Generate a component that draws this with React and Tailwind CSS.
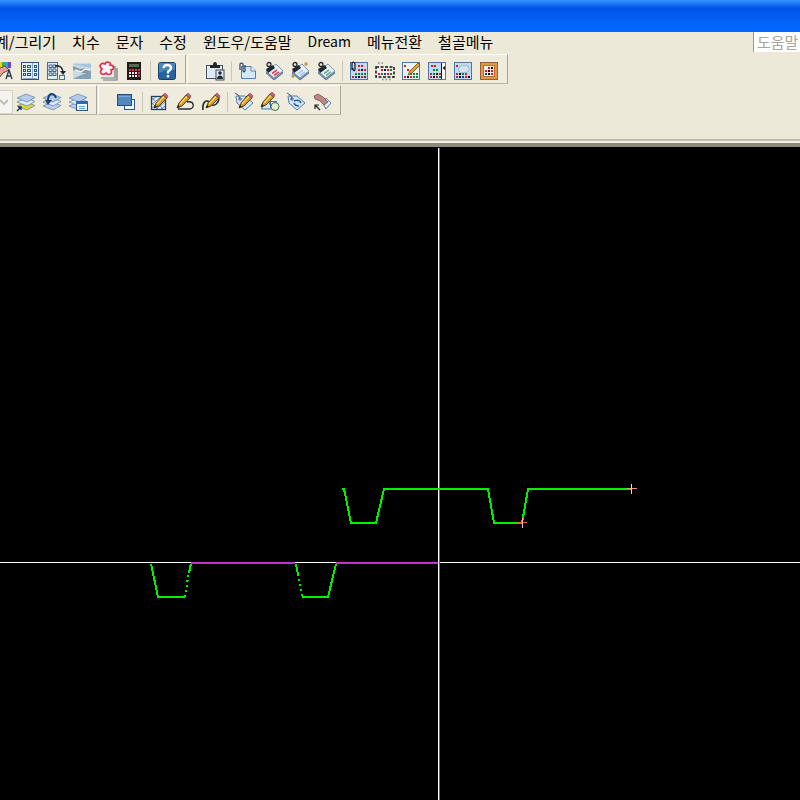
import React from "react";

const FONT = "font-['Noto_Sans_CJK_KR',sans-serif]";

function Dots({ x = 4, y = 4, cols = 4, rows = 4, colors }) {
  const palette = colors || ["#e01818", "#1a7a30", "#111111", "#153a9c", "#e01818", "#111111", "#1a7a30"];
  const cells = [];
  for (let r = 0; r < rows; r++) {
    for (let c = 0; c < cols; c++) {
      cells.push(
        <rect key={r + "-" + c} x={x + c * 3} y={y + r * 3} width="2" height="2" fill={palette[(r * 3 + c * 2) % palette.length]} />
      );
    }
  }
  return <g shapeRendering="crispEdges">{cells}</g>;
}

function Frame({ fill = "#c3dcf6", stroke = "#4a76ad" }) {
  return <rect x="1.5" y="1.5" width="17" height="17" fill={fill} stroke={stroke} shapeRendering="crispEdges" />;
}

function Pencil() {
  return (
    <g>
      <path d="M5 16 L7 11 L14 3 L18 6 L10 14 Z" fill="#d29c22" stroke="#5f3d10" strokeWidth="1" />
      <path d="M14 3 L16 1 L19 4 L18 6 Z" fill="#c9647c" stroke="#8a4055" strokeWidth=".7" />
      <path d="M8 12 L15 4.5" stroke="#f7d867" strokeWidth="1.2" />
      <path d="M5 16 L6 13 L8 14.500 Z" fill="#222" />
    </g>
  );
}

function Layers({ base = "#b9d0ec" }) {
  return (
    <g stroke="#6b88ac" strokeWidth=".8">
      <path d="M1 14 L10 10 L19 13.500 L11 18 Z" fill={base} />
      <path d="M1 10 L10 6 L19 9.500 L11 14 Z" fill="#dceafa" />
      <path d="M1 6 L10 2 L19 5.500 L11 10 Z" fill="#b4cdec" />
    </g>
  );
}

function Clip({ stripe, spark }) {
  return (
    <g>
      <path d="M2 12 L12 5 L19 12 L10 19 Z" fill="#7893b5" stroke="#48648c" strokeWidth=".8" />
      <path d="M2 10 L12 3 L19 10 L10 17 Z" fill="#e6f0fb" stroke="#66809f" strokeWidth=".8" />
      <path d="M8 12.500 L13 9 M10 14.500 L15 11" stroke={stripe} strokeWidth="1.600" />
      <path d="M2 8 L9 4 L11 7 L4 12 Z" fill="#23272c" />
      <circle cx="5" cy="3.500" r="2" fill="none" stroke="#23272c" strokeWidth="1.3" />
      {spark && <path d="M16 1 V5 M14 3 H18 M3 13 V17 M1 15 H5" stroke="#a98d33" strokeWidth="1.2" />}
    </g>
  );
}

function Tag() {
  return (
    <g>
      <path d="M2 4 L11 4 L19 11 L11 18 L3 11 Z" fill="#d3e7f8" stroke="#527ca8" />
      <circle cx="6" cy="7" r="1.2" fill="#fff" stroke="#2d4d78" />
      <path d="M1 1 Q5 2 6 7" fill="none" stroke="#555" />
    </g>
  );
}

const ICONS = {
  colorText: (
    <g>
      <rect x="5" y="1" width="3" height="6" fill="#f0d21c" />
      <rect x="8" y="1" width="3" height="6" fill="#38b54a" />
      <rect x="11" y="1" width="3" height="6" fill="#28a7dd" />
      <rect x="14" y="1" width="3" height="6" fill="#6a48c8" />
      <path d="M4 8 L11 5 L15 9 L9 12 L5 17 L3 13 Z" fill="#e3a295" stroke="#7d4139" />
      <path d="M12 18 L15 9 L18 18 M13 15 H17" fill="none" stroke="#26344f" strokeWidth="1.3" />
    </g>
  ),
  palette: (
    <g shapeRendering="crispEdges">
      <rect x="1.500" y="1.500" width="17" height="17" fill="#e9f2fb" stroke="#294f85" />
      {[4, 8, 12].map((y) =>
        [3, 7.5, 14].map((x) => <rect key={x + "-" + y} x={x} y={y} width="2.500" height="2.500" fill="#fff" stroke="#294f85" />)
      )}
      <path d="M12 2 V18 M3 17 H17" stroke="#8aa6cb" />
    </g>
  ),
  paletteMove: (
    <g>
      <rect x="1.500" y="1.500" width="10" height="17" fill="#dfebf8" stroke="#456c9e" />
      {[4, 8, 12].map((y) => (
        <path key={y} d={"M3 " + y + " h3 v2.500 h-3 z M7 " + y + " h3 v2.500 h-3 z"} fill="#fff" stroke="#294f85" strokeWidth=".9" />
      ))}
      <path d="M9 5 Q17 4 17 12" fill="none" stroke="#18263d" strokeWidth="1.600" />
      <path d="M14 10 H20 L17 14 Z" fill="#18263d" />
      <rect x="13.500" y="14.500" width="5" height="4" fill="#e5f0fb" stroke="#4b70a0" />
    </g>
  ),
  image: (
    <g>
      <rect x="1" y="2" width="18" height="16" fill="#c9dae6" />
      <path d="M1 3 H19 V7 L10 5 Z" fill="#a5c6dc" />
      <path d="M1 5 L8 8 L13 7 L19 10 V13 L10 12 L1 9 Z" fill="#8a98a3" />
      <path d="M1 18 L9 14 L19 11 V18 Z" fill="#7fa3b8" />
      <path d="M3 9 L9 11 L13 8 L18 9" stroke="#eef5fa" strokeWidth="1.500" fill="none" />
    </g>
  ),
  cloud: (
    <g>
      <path d="M3 17 H17 V5 M5 19 H19 V7" fill="none" stroke="#6d7478" strokeWidth="1.200" />
      <rect x="1" y="2" width="14" height="13" fill="#f7ecec" />
      <path d="M4 8 C0 5 3 1 7 3 C8 0 14 1 12 4 C17 4 16 9 13 9 C15 13 10 15 8 12 C5 15 0 12 4 8 Z" fill="#fff2f4" stroke="#e02848" strokeWidth="1.600" />
    </g>
  ),
  calculator: (
    <g shapeRendering="crispEdges">
      <rect x="3" y="1" width="14" height="18" fill="#24191b" />
      <rect x="5" y="3" width="10" height="3" fill="#4f6f4e" />
      {[8, 11, 14].map((y) =>
        [5, 8, 11, 14].map((x) => (
          <rect key={x + "-" + y} x={x} y={y} width="2" height="2" fill={y === 8 || x === 14 ? "#d13d4b" : "#f1e9e9"} />
        ))
      )}
    </g>
  ),
  help: (
    <g>
      <rect x="1.500" y="1.500" width="17" height="17" rx="2" fill="#27649f" stroke="#16406f" />
      <path d="M2 2 H18 V9 Q10 7 2 12 Z" fill="#4c86bd" />
      <path d="M6.500 7 Q7 4 10 4 Q14 4 14 7 Q14 9 11 10.500 V12.500" fill="none" stroke="#fff" strokeWidth="2.300" />
      <rect x="9.800" y="14" width="2.400" height="2.400" fill="#fff" />
    </g>
  ),
  clipboard: (
    <g>
      <rect x="1.500" y="4.500" width="16" height="13" fill="#dfe9f3" stroke="#4b5562" />
      <path d="M5 7 V4 H8 Q8 1 10 1 Q12 1 12 4 H15 V7 Z" fill="#20262e" />
      <rect x="11" y="9" width="8" height="10" fill="#e8edf2" stroke="#3b4654" />
      <circle cx="15" cy="12" r="1.800" fill="#1f2937" />
      <path d="M12 18 Q12 14.500 15 14.500 Q18 14.500 18 18 Z" fill="#1f2937" />
    </g>
  ),
  clippedPage: (
    <g>
      <path d="M3.500 5.500 H13 L17.500 10 V17.500 H3.500 Z" fill="#d4e8fa" stroke="#5480b0" />
      <path d="M13 5.500 V10 H17.500" fill="#fff" stroke="#5480b0" />
      <path d="M2 9 V3 Q3 1 5 3 V10 Q6 12 7 10 V4" fill="none" stroke="#27415f" strokeWidth="1.200" />
    </g>
  ),
  clipRed: <Clip stripe="#e0444e" />,
  clipSpark: <Clip stripe="#a7cbe9" spark />,
  clipGreen: <Clip stripe="#6fb287" />,
  dotsClip: (
    <g>
      <Frame />
      <Dots x={3} y={15} cols={5} rows={1} colors={["#e01818", "#111", "#153a9c"]} />
      <Dots x={6} y={12} cols={4} rows={1} colors={["#1a7a30", "#111"]} />
      <Dots x={9} y={8} cols={3} rows={1} />
      <Dots x={9} y={4} cols={2} rows={1} colors={["#e01818"]} />
      <path d="M3 9 V2 Q5 0 6 3 V9 Q4 11 4 7" fill="none" stroke="#1a2638" strokeWidth="1.300" />
    </g>
  ),
  dotsSelect: (
    <g>
      <rect x="1" y="6" width="18" height="10" fill="#eef0ee" stroke="#111" strokeWidth="1.500" strokeDasharray="3 1.500" />
      <Dots x={6} y={8} cols={4} rows={1} />
      <Dots x={3} y={12} cols={5} rows={1} colors={["#e01818", "#153a9c", "#1a7a30"]} />
      <path d="M3 2 H10 M7 18.500 H16" stroke="#84847e" strokeWidth="1.500" strokeDasharray="1.500 2" />
    </g>
  ),
  dotsEdit: (
    <g>
      <Frame fill="#edf5fc" />
      <Dots x={3} y={15} cols={5} rows={1} />
      <Dots x={9} y={12} cols={3} rows={1} colors={["#1a7a30", "#111"]} />
      <Dots x={3} y={4} cols={1} rows={1} />
      <Dots x={6} y={8} cols={1} rows={1} />
      <path d="M7 14 L9 10 L17 2 L19 4 L11 12 Z" fill="#dfa63d" stroke="#765014" strokeWidth=".9" />
    </g>
  ),
  dotsSplit: (
    <g>
      <Frame />
      <Dots x={3} y={15} cols={4} rows={1} />
      <Dots x={3} y={12} cols={4} rows={1} colors={["#e01818", "#111", "#1a7a30"]} />
      <Dots x={6} y={8} cols={2} rows={1} colors={["#1a7a30", "#111"]} />
      <Dots x={4} y={4} cols={2} rows={1} colors={["#e01818", "#e01818"]} />
      <rect x="14" y="2" width="1" height="16" fill="#111" />
      <rect x="15" y="2" width="3" height="16" fill="#fff" />
      <path d="M18 5 V9 L15.500 7 Z" fill="#111" />
    </g>
  ),
  dotsCloud: (
    <g>
      <Frame />
      <Dots x={3} y={15} cols={5} rows={1} colors={["#e01818", "#153a9c", "#111"]} />
      <Dots x={3} y={12} cols={4} rows={1} colors={["#e01818", "#1a7a30", "#111"]} />
      <Dots x={3} y={4} cols={1} rows={1} />
      <path d="M7 11 Q4 8 7 6 Q8 3 11 5 Q15 3 15 6 Q18 8 15 10 Q14 13 11 11 Q9 13 7 11 Z" fill="#d6e4ee" stroke="#7b96af" strokeDasharray="1.500 1" />
    </g>
  ),
  dotsFrame: (
    <g>
      <rect x="1.500" y="1.500" width="17" height="17" fill="#dd994a" stroke="#9e602a" />
      <rect x="4.500" y="4.500" width="11" height="11" fill="#f6eee4" stroke="#b6702f" />
      <Dots x={9} y={6} cols={2} rows={1} />
      <Dots x={6} y={9} cols={3} rows={2} />
    </g>
  ),
  layersYellow: (
    <g>
      <Layers base="#dfd52b" />
      <path d="M1 19 L5 15 M2 15 H5 V18" fill="none" stroke="#17305c" strokeWidth="1.400" />
    </g>
  ),
  layersBack: (
    <g>
      <Layers />
      <path d="M14 6 Q13 2 9 2 Q6 3 6 9" fill="none" stroke="#173f78" strokeWidth="2" />
      <path d="M3 8 H10 L6 13 Z" fill="#173f78" />
    </g>
  ),
  layersWindow: (
    <g>
      <Layers />
      <rect x="8.500" y="9.500" width="11" height="9" fill="#f4f9ff" stroke="#225287" />
      <rect x="8" y="9" width="12" height="3" fill="#2a6bab" />
      <path d="M11 14.500 H17 M11 16.500 H17" stroke="#6e9ac5" />
    </g>
  ),
  order: (
    <g shapeRendering="crispEdges">
      <rect x="8.500" y="7.500" width="10" height="10" fill="#f0f7ff" stroke="#2e5788" />
      <rect x="1.500" y="2.500" width="14" height="11" fill="#5487be" stroke="#244d80" />
      <path d="M3 4 H14" stroke="#7aa8d8" />
    </g>
  ),
  hatchEdit: (
    <g>
      <rect x="2.500" y="4.500" width="14" height="13" fill="#e2effa" stroke="#1d3f62" strokeWidth="1.300" />
      <path d="M3 8 L7 5 M3 12 L12 5 M3 16 L16 6 M7 17 L16 10 M12 17 L16 14 M3 11 L9 17 M3 6 L14 17" stroke="#53799c" strokeWidth=".8" />
      <Pencil />
    </g>
  ),
  polyEdit: (
    <g>
      <path d="M3 17 H15 Q19 16 18 12 Q17 9 12 10" fill="none" stroke="#252b2e" strokeWidth="1.300" />
      <g transform="translate(-3 0)"><Pencil /></g>
    </g>
  ),
  splineEdit: (
    <g>
      <path d="M2 18 C1 9 6 7 9 11 C12 17 20 10 17 4" fill="none" stroke="#252b2e" strokeWidth="1.600" />
      <Pencil />
    </g>
  ),
  tagEdit: (
    <g>
      <Tag />
      <Pencil />
    </g>
  ),
  shapesEdit: (
    <g>
      <path d="M1.500 17 L7 6 L12 17 Z" fill="#d3e7f8" stroke="#4574a4" />
      <rect x="10.500" y="9.500" width="6" height="6" fill="#fff" stroke="#4574a4" />
      <circle cx="15" cy="14.500" r="4" fill="#e5f0c9" stroke="#3f6d54" />
      <g transform="translate(-4 -1)"><Pencil /></g>
    </g>
  ),
  tagSync: (
    <g>
      <Tag />
      <path d="M8 9 Q13 7 15 11 M13 14 Q9 14 8 11" fill="none" stroke="#27619b" strokeWidth="1.500" />
    </g>
  ),
  pick: (
    <g>
      <path d="M10 10 L14 6 L19 11 L14 17 Z" fill="#dceafa" stroke="#6282a6" />
      <path d="M2 4 L6 2 L11 5 L16 10 L12 13 L8 9 L3 7 Z" fill="#b98782" stroke="#82534f" strokeWidth=".8" />
      <path d="M8 18 L3 13 M3 17 V13 H7" fill="none" stroke="#222" strokeWidth="1.200" />
    </g>
  ),
};

function Tool({ icon, label }) {
  return (
    <button type="button" aria-label={label} className="flex h-6 w-[26px] shrink-0 items-center justify-center">
      <svg viewBox="0 0 20 20" className="size-5" aria-hidden="true">
        {ICONS[icon]}
      </svg>
    </button>
  );
}

function Tools({ items }) {
  return items.map(([icon, label]) => <Tool key={icon} icon={icon} label={label} />);
}

function Separator() {
  return (
    <div className="flex h-6 w-[7px] shrink-0 justify-center">
      <div className="h-5 w-px self-center bg-[#cbc7b8]" />
    </div>
  );
}

function Band({ className = "", children }) {
  return (
    <div
      className={
        "flex h-[30px] shrink-0 items-center border-t border-r border-b border-t-white border-r-[#aca899] border-b-[#b9b5a5] bg-[#efecde] pt-1 " +
        className
      }
    >
      {children}
    </div>
  );
}

function MenuItem({ children, latin }) {
  return (
    <button type="button" className={(latin ? "text-sm" : "text-[15px]") + " leading-[19px] whitespace-nowrap text-black"}>
      {children}
    </button>
  );
}

function MenuBar() {
  return (
    <nav className="flex h-[21px] items-start justify-between overflow-hidden">
      <div className="-ml-[5px] flex gap-4">
        <MenuItem>계/그리기</MenuItem>
        <MenuItem>치수</MenuItem>
        <MenuItem>문자</MenuItem>
        <MenuItem>수정</MenuItem>
        <MenuItem>윈도우/도움말</MenuItem>
        <MenuItem latin>Dream</MenuItem>
        <MenuItem>메뉴전환</MenuItem>
        <MenuItem>철골메뉴</MenuItem>
      </div>
      <input
        type="text"
        aria-label="도움말"
        placeholder="도움말"
        className="h-5 w-[47px] border-l border-[#7f9db9] bg-white pb-[2px] pl-[3px] text-[15px] leading-[18px] placeholder:text-[#aaa596]"
      />
    </nav>
  );
}

function Drawing() {
  return (
    <svg className="block h-full w-full" aria-label="도면">
      <g fill="none" stroke="#00f000" strokeWidth="2" shapeRendering="crispEdges">
        <path d="M342 342 H344 L351 376 H376 L384 342 H488 L494 376 H522 L528 342 H631" />
        <path d="M151 417 L158 450 H185" />
        <path d="M185 450 L190 417" strokeDasharray="2 3" />
        <path d="M189 426 L191 417" />
        <path d="M296 417 L298 427" />
        <path d="M298 427 L302 450" strokeDasharray="2 3" />
        <path d="M302 450 H328 L336 417" />
      </g>
      <g shapeRendering="crispEdges">
        <rect x="0" y="415" width="100%" height="1" fill="#ffffff" />
        <rect x="191" y="416" width="104" height="1" fill="#14a820" />
        <rect x="336" y="416" width="102" height="1" fill="#14a820" />
        <rect x="191" y="415" width="104" height="1" fill="#c838c8" />
        <rect x="336" y="415" width="102" height="1" fill="#c838c8" />
        <rect x="438" y="1" width="1" height="100%" fill="#ffffff" />
        <rect x="439" y="1" width="1" height="100%" fill="#666666" />
        <rect x="438" y="341" width="2" height="2" fill="#58c020" />
        <rect x="627" y="341" width="10" height="1" fill="#e69a86" />
        <rect x="631" y="337" width="1" height="10" fill="#f0d8cc" />
        <rect x="518" y="375" width="9" height="1" fill="#ff5050" />
        <rect x="522" y="371" width="1" height="10" fill="#f0c0b0" />
      </g>
    </svg>
  );
}

export default function App() {
  return (
    <div className={"flex h-screen flex-col overflow-hidden bg-[#ece9d8] " + FONT}>
      <header className="h-8 shrink-0 bg-linear-to-b from-[#3593ff] via-[#0355e8] via-25% to-[#0468ff] to-90%" />
      <MenuBar />
      <div className="flex h-[86px] shrink-0 flex-col gap-px overflow-hidden pt-px">
        <div className="flex gap-px">
          <Band className="-ml-[9px] pr-[5px]">
            <Tools
              items={[
                ["colorText", "색상"],
                ["palette", "도구 팔레트"],
                ["paletteMove", "팔레트 이동"],
                ["image", "이미지"],
                ["cloud", "구름형"],
                ["calculator", "계산기"],
              ]}
            />
            <Separator />
            <Tool icon="help" label="도움말 보기" />
          </Band>
          <Band className="border-l border-l-white pr-[5px] pl-[14px]">
            <Tool icon="clipboard" label="클립보드" />
            <Separator />
            <Tools
              items={[
                ["clippedPage", "첨부"],
                ["clipRed", "참조 편집"],
                ["clipSpark", "참조 추가"],
                ["clipGreen", "참조 저장"],
              ]}
            />
            <Separator />
            <Tools
              items={[
                ["dotsClip", "이미지 첨부"],
                ["dotsSelect", "이미지 자르기"],
                ["dotsEdit", "이미지 조정"],
                ["dotsSplit", "이미지 품질"],
                ["dotsCloud", "이미지 투명도"],
                ["dotsFrame", "이미지 프레임"],
              ]}
            />
          </Band>
        </div>
        <div className="flex gap-px">
          <Band className="pr-[5px]">
            <div className="relative h-6 w-[13px]">
              <select disabled aria-label="도면층" className="h-6 w-full appearance-none border border-l-0 border-[#d3d0c4] bg-[#f5f4ee]">
                <option></option>
              </select>
              <svg viewBox="0 0 8 6" className="pointer-events-none absolute top-[9px] left-0 h-[6px] w-2" aria-hidden="true">
                <path d="M0 1 L4 5 L8 1" fill="none" stroke="#c3c0b3" strokeWidth="2" />
              </svg>
            </div>
            <Tools
              items={[
                ["layersYellow", "도면층 지정"],
                ["layersBack", "이전 도면층"],
                ["layersWindow", "도면층 상태"],
              ]}
            />
          </Band>
          <Band className="border-l border-l-white pr-[5px] pl-[14px]">
            <Tool icon="order" label="그리기 순서" />
            <Separator />
            <Tools
              items={[
                ["hatchEdit", "해치 편집"],
                ["polyEdit", "폴리선 편집"],
                ["splineEdit", "스플라인 편집"],
              ]}
            />
            <Separator />
            <Tools
              items={[
                ["tagEdit", "속성 편집"],
                ["shapesEdit", "블록 편집"],
                ["tagSync", "속성 동기화"],
                ["pick", "속성 추출"],
              ]}
            />
          </Band>
        </div>
      </div>
      <main className="min-h-0 flex-1 border-t-2 border-[#c0bdb5]">
        <div className="flex h-full flex-col border-t-2 border-[#f4f2e8]">
          <div className="min-h-0 flex-1 border-t-4 border-[#8d8b7c] bg-black">
            <Drawing />
          </div>
        </div>
      </main>
    </div>
  );
}
